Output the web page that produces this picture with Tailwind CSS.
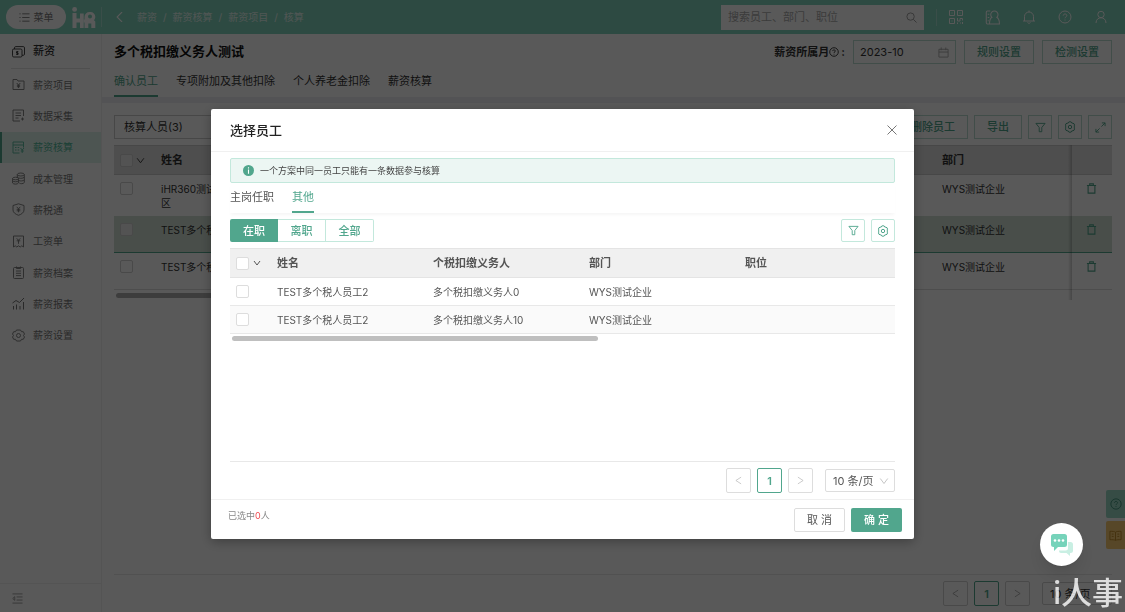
<!DOCTYPE html>
<html lang="zh-CN">
<head>
    <meta charset="UTF-8">
    <meta name="viewport" content="width=device-width, initial-scale=1.0">
    <title>薪资核算</title>
    <script src="https://cdn.jsdelivr.net/npm/@tailwindcss/browser@4"></script>
</head>
<body class="font-['Inter','Noto_Sans_CJK_SC',sans-serif] bg-white text-[#333] text-[11px] leading-[14px] h-screen overflow-hidden flex flex-col">

    <!-- Shared icons -->
    <svg class="hidden">
        <symbol id="i-filter" viewBox="0 0 12 12"><path d="M1 1.500h10L7.400 6v4.600H4.600V6z"/></symbol>
        <symbol id="i-gear" viewBox="0 0 12 12"><path d="M4.700 1.100 6 .7l1.300.4.5 1 1.100.1 1.200.6.400 1.300-.4 1 .6.9-.6.9.400 1-.4 1.300-1.200.6-1.100.1-.5 1L6 11.300l-1.300-.4-.5-1-1.100-.1-1.200-.6-.4-1.300.4-1L1.300 6l.6-.9-.4-1 .4-1.300 1.200-.6 1.100-.1z"/><circle cx="6" cy="6" r="1.700"/></symbol>
        <symbol id="i-trash" viewBox="0 0 12 12"><path d="M1 2.800h10M4 2.800V1h4v1.800M2.300 2.800v8.200h7.400v-8.200"/></symbol>
        <symbol id="i-down" viewBox="0 0 12 12"><path d="m1.500 3 4.500 6 4.500-6"/></symbol>
        <symbol id="i-left" viewBox="0 0 12 12"><path d="M9.500 1.500 2.500 6l7 4.500"/></symbol>
        <symbol id="i-right" viewBox="0 0 12 12"><path d="m2.500 1.500 7 4.500-7 4.500"/></symbol>
        <symbol id="i-help" viewBox="0 0 14 14"><circle cx="7" cy="7" r="6"/><path d="M5.200 5.700c0-2.300 3.600-2.300 3.600-.1C8.800 6.900 7 6.900 7 8.300M7 9.500v1"/></symbol>
    </svg>

    <!-- Top bar -->
    <header class="h-[34px] shrink-0 bg-[#80d3bc] flex items-center pl-[6px] pr-[17px] text-white text-[10px]">
        <button class="w-[60px] h-6 rounded-full bg-white text-[#777] flex items-center justify-center gap-1">
            <svg class="size-[11px]" viewBox="0 0 12 12" fill="none" stroke="currentColor"><path d="M3.500 2h8M3.500 6h8M3.500 10h8M.5 2h1.200M.5 6h1.200M.5 10h1.200"/></svg>
            菜单
        </button>
        <svg class="ml-[6px] w-6 h-[21px]" viewBox="0 0 24 21" aria-label="iHR">
            <g fill="#fff">
                <circle cx="2.600" cy="2.400" r="2.400"/>
                <path d="M.5 6h4v5.500H8V6.500h3.700V21H8v-5.500H4.500V21h-4z"/>
                <path fill-rule="evenodd" d="M12.500 10a5 5 0 0 1 5-5h1a4.800 4.800 0 0 1 4.800 4.800c0 1.500-.6 2.700-1.300 3.400l1.300 1.300V21h-4v-4.500h-3V21h-3.800zM18 7.500a2 2 0 1 0 0 4 2 2 0 1 0 0-4z"/>
                <path d="M11.500 12.500h2v3h-2z"/>
            </g>
        </svg>
        <div class="ml-[5px] w-px h-5 bg-white/30"></div>
        <button class="ml-[13px]" aria-label="返回"><svg class="w-[10px] h-[10px]" viewBox="0 0 12 12" fill="none" stroke="currentColor" stroke-width="1.300"><path d="M8.500 0 2.500 6l6 6"/></svg></button>
        <nav class="ml-[12px] flex gap-[6px] text-white/80">
            <a href="#">薪资</a><span>/</span><a href="#">薪资核算</a><span>/</span><a href="#">薪资项目</a><span>/</span><a href="#">核算</a>
        </nav>
        <div class="ml-auto w-[203px] h-[25px] bg-white flex items-center px-[7px]">
            <input type="text" aria-label="搜索" placeholder="搜索员工、部门、职位" class="flex-1 min-w-0 text-[11px] outline-none placeholder:text-[#aaa]">
            <svg class="size-[11px] text-[#999]" viewBox="0 0 12 12" fill="none" stroke="currentColor"><circle cx="5" cy="5" r="4"/><path d="m8 8 3.500 3.500"/></svg>
        </div>
        <div class="ml-[12px] w-px h-[17px] bg-white/30"></div>
        <div class="ml-[12px] flex items-center gap-[22px]">
            <button aria-label="二维码"><svg class="size-[14px]" viewBox="0 0 14 14" fill="none" stroke="currentColor"><path d="M.5.5h5v5h-5zM8.500.5h5v5h-5zM.5 8.500h5v5h-5zM2.500 3h1M10.500 3h1M2.500 11h1M8.500 8v3h2.500V8.500h2.500v2M8.500 12.500v1.500M11 13h1M13.500 12v2"/></svg></button>
            <button aria-label="通讯录"><svg class="size-[15px]" viewBox="0 0 14 14" fill="none" stroke="currentColor"><path d="M5 1H2.200c-.7 0-1 .4-1 1v10c0 .6.300 1 1 1h1.500M2.500 4h1.500M2.500 7h1.500M2.500 10h1"/><path d="M6.500 6.800A3.400 3.400 0 1 1 11 6.800c1.700 1 2.500 2.700 2.500 6.200H4.200c0-3.500.6-5.200 2.300-6.200z"/></svg></button>
            <button aria-label="通知"><svg class="size-[14px]" viewBox="0 0 14 14" fill="none" stroke="currentColor"><path d="M1 11h12M2.500 11V6.500a4.500 4.500 0 0 1 9 0V11M7 2V.5M5.500 12.500c.5 1 2.500 1 3 0"/></svg></button>
            <button aria-label="帮助"><svg class="size-[14px]" fill="none" stroke="currentColor"><use href="#i-help"/></svg></button>
            <button aria-label="我的"><svg class="size-[14px]" viewBox="0 0 14 14" fill="none" stroke="currentColor"><circle cx="7" cy="4.500" r="3.200"/><path d="M2 13c0-7 10-7 10 0"/></svg></button>
        </div>
    </header>

    <div class="flex-1 min-h-0 flex">
        <!-- Sidebar -->
        <aside class="w-[102px] shrink-0 border-r border-[#f0f0f0] flex flex-col text-[10px] text-[#777]">
            <div class="h-[34px] flex items-center gap-2 pl-[12px] text-[11px] font-medium text-[#333]">
                <svg class="size-[13px]" viewBox="0 0 13 13" fill="none" stroke="currentColor" stroke-width=".9"><rect x=".5" y="4" width="9.500" height="8" rx="1.300"/><path d="M2.500 4V2.800c0-.7.400-1.200 1.200-1.200h7.600c.8 0 1.200.5 1.200 1.200v6.400c0 .7-.4 1.100-1.200 1.100H10M6.400 6.700H4.500v1.300h1.600v1.400H4.200M5.300 6v4"/></svg>
                薪资
            </div>
            <div class="mx-[11px] border-t border-[#e2e2e2]"></div>
            <nav class="grid grid-rows-9 h-[282px]">
                <a href="#" class="flex items-center gap-2 pl-[12px]">
                    <svg class="size-[13px]" viewBox="0 0 13 13" fill="none" stroke="currentColor" stroke-width=".9"><path d="M1 11.500v-10h4l1 1.500h6v8.500zM4.700 5l1.800 2 1.800-2M6.500 7v3M4.900 7.300h3.200M4.900 8.700h3.200"/></svg>
                    薪资项目
                </a>
                <a href="#" class="flex items-center gap-2 pl-[12px]">
                    <svg class="size-[13px]" viewBox="0 0 13 13" fill="none" stroke="currentColor" stroke-width=".9"><path d="M11.500 7V1H1v11h7M3.500 4H9M3.500 6.500H9M3.500 9h3M10.500 8.500v3M9 10h3"/></svg>
                    数据采集
                </a>
                <a href="#" class="flex items-center gap-2 pl-[10px] border-l-2 border-[#51a68d] bg-[#dcf3ec] text-[#51b898]">
                    <svg class="size-[13px]" viewBox="0 0 13 13" fill="none" stroke="currentColor" stroke-width=".9"><path d="M11.500 6.500V1H1v11h6.500M1 4h10.500M3 6.500h1.500M5.700 6.500h1.500M3 9h1.500M5.700 9h1.500M8.500 7l1.700 2L12 7M10.200 9v3M8.800 10h3"/></svg>
                    薪资核算
                </a>
                <a href="#" class="flex items-center gap-2 pl-[12px]">
                    <svg class="size-[13px]" viewBox="0 0 13 13" fill="none" stroke="currentColor" stroke-width=".9"><ellipse cx="8.800" cy="2.500" rx="3.500" ry="1.500"/><path d="M5.300 2.500v3M12.300 2.500v8c-1 1.500-4 1.500-5 .5M5.300 5.200c1 1.500 6 1.500 7 0M6.500 8.500c2 .8 5 .5 5.800-.6"/><ellipse cx="3.500" cy="6.500" rx="2.900" ry="1.300"/><path d="M.6 6.500V11c.8 1.500 5 1.500 5.800 0V6.500M.6 8.800c.8 1.300 5 1.300 5.800 0"/></svg>
                    成本管理
                </a>
                <a href="#" class="flex items-center gap-2 pl-[12px]">
                    <svg class="size-[13px]" viewBox="0 0 13 13" fill="none" stroke="currentColor" stroke-width=".9"><path d="M6.500.8 12 2.500v4.500c0 2.500-2.500 4.300-5.500 5.300C3.500 11.300 1 9.500 1 7V2.500zM4.700 3.800l1.800 2 1.800-2M6.500 5.800v3.500M4.700 6.300h3.600M4.700 7.800h3.600"/></svg>
                    薪税通
                </a>
                <a href="#" class="flex items-center gap-2 pl-[12px]">
                    <svg class="size-[13px]" viewBox="0 0 13 13" fill="none" stroke="currentColor" stroke-width=".9"><path d="M1.500 12V1h10v11l-1.700-1.200L8.200 12l-1.700-1.200L4.800 12l-1.600-1.200zM4.700 3.300l1.800 2 1.800-2M6.500 5.300v3.500M4.700 5.800h3.600"/></svg>
                    工资单
                </a>
                <a href="#" class="flex items-center gap-2 pl-[12px]">
                    <svg class="size-[13px]" viewBox="0 0 13 13" fill="none" stroke="currentColor" stroke-width=".9"><rect x="1.500" y="1.500" width="10" height="11" rx="1"/><path d="M4.500.5v2h4v-2M4 5h5M4 7.300h5M4 9.600h5"/></svg>
                    薪资档案
                </a>
                <a href="#" class="flex items-center gap-2 pl-[12px]">
                    <svg class="size-[13px]" viewBox="0 0 13 13" fill="none" stroke="currentColor"><path d="M1.500 9v3.500M4.500 7.500v5M8 9v3.500M11.500 5v7.500M.5 6 4 3.500l3.500 2L12 1"/></svg>
                    薪资报表
                </a>
                <a href="#" class="flex items-center gap-2 pl-[12px]">
                    <svg class="size-[13px]" viewBox="0 0 13 13" fill="none" stroke="currentColor" stroke-width=".9"><path d="M4.500 1h4l1 1.700h1.800L12.500 5l-1 1.500 1 1.500-1.200 2.300H9.500L8.500 12h-4l-1-1.700H1.700L.5 8l1-1.500L.5 5l1.200-2.300h1.800z"/><circle cx="6.500" cy="6.500" r="2"/></svg>
                    薪资设置
                </a>
            </nav>
            <div class="mt-auto h-[29px] border-t border-[#efefef] flex items-center pl-[12px]">
                <button aria-label="收起菜单"><svg class="block size-[11px] text-[#999]" viewBox="0 0 12 12" fill="none" stroke="currentColor"><path d="M.5 1h11M5 4.300h6.500M5 7.700h6.500M.5 11h11M3 4v4L.8 6z"/></svg></button>
            </div>
        </aside>

        <!-- Main page -->
        <main class="flex-1 min-w-0 flex flex-col">
            <div class="flex items-center gap-2 pt-[6px] pl-[12px] pr-[13px]">
                <h1 class="text-[13px] font-bold text-[#111] mr-auto pb-[2px]">多个税扣缴义务人测试</h1>
                <label for="month" class="font-bold flex items-center">薪资所属月<svg class="size-[10px]" fill="none" stroke="currentColor" stroke-width="1.300" viewBox="0 0 14 14"><use href="#i-help"/></svg><span class="pl-[2px]">:</span></label>
                <div class="w-[103px] h-6 border border-[#b9ddd2] flex items-center px-[6px]">
                    <input id="month" type="text" value="2023-10" class="flex-1 min-w-0 outline-none">
                    <svg class="size-[11px] text-[#aaa]" viewBox="0 0 12 12" fill="none" stroke="currentColor"><path d="M1 2.500h10v8.500H1zM1 5.500h10M3.500.5v3M8.500.5v3"/></svg>
                </div>
                <button class="h-6 px-[12px] border border-[#b9ddd2] text-[#51a68d] font-medium">规则设置</button>
                <button class="h-6 px-[12px] border border-[#b9ddd2] text-[#51a68d] font-medium">检测设置</button>
            </div>
            <nav class="flex gap-[18px] px-[12px] h-[33px]">
                <a href="#" class="flex items-center pt-[2px] border-b-2 border-[#51a68d] text-[#51a68d]">确认员工</a>
                <a href="#" class="flex items-center pt-[2px] border-b-2 border-transparent">专项附加及其他扣除</a>
                <a href="#" class="flex items-center pt-[2px] border-b-2 border-transparent">个人养老金扣除</a>
                <a href="#" class="flex items-center pt-[2px] border-b-2 border-transparent">薪资核算</a>
            </nav>
            <div class="h-[6px] bg-[#edeef3]"></div>

            <div class="flex-1 flex flex-col pl-[12px] pr-[13px] pt-[12px]">
                <div class="flex items-center gap-[6px]">
                    <button class="mr-auto w-[120px] h-6 border border-[#ccc] text-left pl-[9px]">核算人员(3)</button>
                    <button class="h-6 px-[12px] border border-[#b9ddd2] text-[#51a68d] font-medium">删除员工</button>
                    <button class="h-6 px-[12px] border border-[#b9ddd2] text-[#51a68d] font-medium">导出</button>
                    <button aria-label="筛选" class="size-6 border border-[#b9ddd2] text-[#51a68d] flex items-center justify-center"><svg class="size-[11px]" fill="none" stroke="currentColor"><use href="#i-filter"/></svg></button>
                    <button aria-label="设置" class="size-6 border border-[#b9ddd2] text-[#51a68d] flex items-center justify-center"><svg class="size-[12px]" fill="none" stroke="currentColor"><use href="#i-gear"/></svg></button>
                    <button aria-label="全屏" class="size-6 border border-[#b9ddd2] text-[#51a68d] flex items-center justify-center"><svg class="size-[11px]" viewBox="0 0 12 12" fill="none" stroke="currentColor"><path d="M7.500 1H11v3.500M11 1 7 5M4.500 11H1V7.500M1 11l4-4"/></svg></button>
                </div>

                <div class="relative mt-[6px] pb-[10px]">
                    <table class="w-full table-fixed text-left text-[10px]">
                        <colgroup><col class="w-[47px]"><col><col class="w-[130px]"><col class="w-[40px]"></colgroup>
                        <thead class="bg-[#dedede] text-[11px]">
                            <tr class="h-[29px] border-y border-[#ccc]">
                                <th class="pl-[6px]"><div class="flex items-center gap-[3px]"><input type="checkbox" aria-label="全选" class="appearance-none size-[13px] border border-[#d0d0d0] rounded-xs bg-[#eee]"><svg class="size-[9px]" fill="none" stroke="currentColor" stroke-width="1.200"><use href="#i-down"/></svg></div></th>
                                <th>姓名</th><th>部门</th><th></th>
                            </tr>
                        </thead>
                        <tbody class="align-top">
                            <tr class="h-[41px]">
                                <td class="pl-[6px] pt-[7px]"><input type="checkbox" aria-label="选择" class="block appearance-none size-[13px] border border-[#d0d0d0] rounded-xs"></td>
                                <td class="pt-[7px]">iHR360测试<br>区</td><td class="pt-[7px]">WYS测试企业</td>
                                <td class="pt-[8px] pl-[14px] text-[#51a68d]"><button aria-label="删除"><svg class="block size-[11px]" fill="none" stroke="currentColor" stroke-width="1.200"><use href="#i-trash"/></svg></button></td>
                            </tr>
                            <tr class="h-[37px] bg-[#d0dfd4] border-b border-[#51a68d]">
                                <td class="pl-[6px] pt-[7px]"><input type="checkbox" aria-label="选择" class="block appearance-none size-[13px] border border-[#d0d0d0] rounded-xs bg-[#eee]"></td>
                                <td class="pt-[7px]">TEST多个税</td><td class="pt-[7px]">WYS测试企业</td>
                                <td class="pt-[8px] pl-[14px] text-[#51a68d]"><button aria-label="删除"><svg class="block size-[11px]" fill="none" stroke="currentColor" stroke-width="1.200"><use href="#i-trash"/></svg></button></td>
                            </tr>
                            <tr class="h-[37px] border-b border-[#ddd]">
                                <td class="pl-[6px] pt-[7px]"><input type="checkbox" aria-label="选择" class="block appearance-none size-[13px] border border-[#d0d0d0] rounded-xs"></td>
                                <td class="pt-[7px]">TEST多个税</td><td class="pt-[7px]">WYS测试企业</td>
                                <td class="pt-[8px] pl-[14px] text-[#51a68d]"><button aria-label="删除"><svg class="block size-[11px]" fill="none" stroke="currentColor" stroke-width="1.200"><use href="#i-trash"/></svg></button></td>
                            </tr>
                        </tbody>
                    </table>
                    <!-- shadow of the pinned column -->
                    <div class="absolute inset-y-0 right-[40px] w-1 bg-linear-to-l from-black/20 to-transparent"></div>
                    <div class="absolute bottom-[2px] left-[2px] h-[5px] w-1/2 rounded-full bg-[#b0b0b0]"></div>
                </div>

                <div class="mt-auto h-[38px] border-t border-[#e8e8e8] flex items-center justify-end gap-[6px]">
                    <button aria-label="上一页" class="w-[25px] h-[25px] border border-[#d0d0d0] rounded-xs flex items-center justify-center"><svg class="size-[9px] text-[#999]" fill="none" stroke="currentColor"><use href="#i-left"/></svg></button>
                    <button class="w-[25px] h-[25px] border border-[#51a68d] rounded-xs text-[#51a68d] font-semibold">1</button>
                    <button aria-label="下一页" class="w-[25px] h-[25px] border border-[#d0d0d0] rounded-xs flex items-center justify-center"><svg class="size-[9px] text-[#999]" fill="none" stroke="currentColor"><use href="#i-right"/></svg></button>
                    <select aria-label="每页条数" class="appearance-none ml-[6px] w-[70px] h-[23px] border border-[#d0d0d0] rounded-xs pl-[7px]"><option>10 条/页</option></select>
                </div>
            </div>
        </main>
    </div>

    <!-- Side shortcuts -->
    <div class="fixed right-0 top-[490px] flex flex-col gap-[3px]">
        <button aria-label="帮助中心" class="w-[19px] h-7 rounded-l-xs bg-[#9ad9c6] text-[#3a8f76] flex items-center justify-center"><svg class="size-[12px]" fill="none" stroke="currentColor"><use href="#i-help"/></svg></button>
        <button aria-label="手册" class="w-[19px] h-7 rounded-l-xs bg-[#f8cb72] text-[#c08a28] flex items-center justify-center"><svg class="size-[13px]" viewBox="0 0 14 14" fill="none" stroke="currentColor"><path d="M7 3.500C6 2.500 3.500 2.500 1 2.500v9c2.500 0 5 0 6 .8 1-.8 3.500-.8 6-.8v-9c-2.500 0-5 0-6 1zM7 3.500v8.500M3 5.500h2M3 8h2M9 5.500h2M9 8h2"/></svg></button>
    </div>

    <!-- Modal -->
    <div class="fixed inset-0 bg-black/65 flex justify-center items-start pt-[109px]">
        <div role="dialog" aria-label="选择员工" class="w-5/8 min-h-[430px] bg-white rounded-xs shadow-[0_3px_12px_rgba(0,0,0,0.3)] flex flex-col">
            <div class="h-[43px] border-b border-[#f0f0f0] flex items-center justify-between pl-[19px] pr-[17px]">
                <h2 class="text-[13px] font-medium text-[#222]">选择员工</h2>
                <button aria-label="关闭"><svg class="size-[10px] text-[#777]" viewBox="0 0 10 10" fill="none" stroke="currentColor"><path d="m.5.5 9 9M9.500.5l-9 9"/></svg></button>
            </div>

            <div class="flex-1 flex flex-col px-[19px] pt-[6px]">
                <div class="h-[25px] border border-[#c3e8dc] bg-[#ecf6f3] rounded-xs flex items-center gap-[6px] pl-[12px] text-[9px] text-[#444]">
                    <svg class="size-[11px]" viewBox="0 0 12 12"><circle cx="6" cy="6" r="6" fill="#51a68d"/><path d="M6 2.500v1.200M6 5v4.500" stroke="#fff" stroke-width="1.200"/></svg>
                    一个方案中同一员工只能有一条数据参与核算
                </div>
                <nav class="flex gap-[18px] h-[30px] text-[#555] shadow-[0_3px_3px_-1px_rgba(0,0,0,0.04)]">
                    <a href="#" class="flex items-center border-b-2 border-transparent">主岗任职</a>
                    <a href="#" class="flex items-center border-b-2 border-[#51a68d] text-[#51a68d]">其他</a>
                </nav>

                <div class="mt-[6px] flex gap-[6px]">
                    <div class="mr-auto flex text-[#51a68d] font-medium">
                        <button class="w-12 h-[23px] bg-[#51a68d] text-white rounded-l-xs">在职</button>
                        <button class="w-12 h-[23px] border-y border-r border-[#c3e8dc]">离职</button>
                        <button class="w-12 h-[23px] border-y border-r border-[#c3e8dc] rounded-r-xs">全部</button>
                    </div>
                    <button aria-label="筛选" class="w-6 h-[23px] border border-[#c3e8dc] rounded-xs text-[#51a68d] flex items-center justify-center"><svg class="size-[11px]" fill="none" stroke="currentColor"><use href="#i-filter"/></svg></button>
                    <button aria-label="设置" class="w-6 h-[23px] border border-[#c3e8dc] rounded-xs text-[#51a68d] flex items-center justify-center"><svg class="size-[12px]" fill="none" stroke="currentColor"><use href="#i-gear"/></svg></button>
                </div>

                <table class="mt-[6px] w-full table-fixed text-left text-[10px] text-[#555]">
                    <colgroup><col class="w-[47px]"><col class="w-[156px]"><col class="w-[156px]"><col class="w-[156px]"><col></colgroup>
                    <thead class="bg-[#f0f0f0] text-[11px]">
                        <tr class="h-[29px] border-y border-[#e4e4e4]">
                            <th class="pl-[6px]"><div class="flex items-center gap-[4px]"><input type="checkbox" aria-label="全选" class="appearance-none size-[13px] border border-[#ddd] rounded-xs bg-white"><svg class="size-[8px]" fill="none" stroke="currentColor" stroke-width="1.500"><use href="#i-down"/></svg></div></th>
                            <th>姓名</th><th>个税扣缴义务人</th><th>部门</th><th>职位</th>
                        </tr>
                    </thead>
                    <tbody>
                        <tr class="h-[28px] border-b border-[#e8e8e8]">
                            <td class="pl-[6px]"><input type="checkbox" aria-label="选择" class="block appearance-none size-[13px] border border-[#ddd] rounded-xs bg-white"></td>
                            <td>TEST多个税人员工2</td><td>多个税扣缴义务人0</td><td>WYS测试企业</td><td></td>
                        </tr>
                        <tr class="h-[28px] border-b border-[#e8e8e8] bg-[#fafafa]">
                            <td class="pl-[6px]"><input type="checkbox" aria-label="选择" class="block appearance-none size-[13px] border border-[#ddd] rounded-xs bg-white"></td>
                            <td>TEST多个税人员工2</td><td>多个税扣缴义务人10</td><td>WYS测试企业</td><td></td>
                        </tr>
                    </tbody>
                </table>
                <div class="mt-[2px] ml-[2px] h-[5px] w-[55%] rounded-full bg-[#bfbfbf]"></div>

                <div class="mt-auto h-[38px] border-t border-[#e8e8e8] flex items-center justify-end gap-[6px]">
                    <button aria-label="上一页" class="w-[25px] h-[25px] border border-[#ddd] rounded-xs flex items-center justify-center"><svg class="size-[9px] text-[#bbb]" fill="none" stroke="currentColor"><use href="#i-left"/></svg></button>
                    <button class="w-[25px] h-[25px] border border-[#51a68d] rounded-xs text-[#51a68d] font-semibold">1</button>
                    <button aria-label="下一页" class="w-[25px] h-[25px] border border-[#ddd] rounded-xs flex items-center justify-center"><svg class="size-[9px] text-[#bbb]" fill="none" stroke="currentColor"><use href="#i-right"/></svg></button>
                    <div class="relative ml-[6px]">
                        <select aria-label="每页条数" class="block appearance-none w-[70px] h-[23px] border border-[#ddd] rounded-xs pl-[7px] text-[#555]"><option>10 条/页</option></select>
                        <svg class="absolute right-[6px] top-[7px] size-[10px] text-[#bbb] pointer-events-none" fill="none" stroke="currentColor"><use href="#i-down"/></svg>
                    </div>
                </div>
            </div>

            <div class="h-[40px] border-t border-[#f0f0f0] flex items-center pl-[17px] pr-[12px] gap-[6px]">
                <p class="mr-auto pb-[8px] text-[9px] text-[#888]">已选中<span class="text-[#f04a50]">0</span>人</p>
                <button class="w-[51px] h-6 border border-[#ddd] rounded-xs text-[#555]">取 消</button>
                <button class="w-[51px] h-6 rounded-xs bg-[#51a68d] text-white font-medium">确 定</button>
            </div>
        </div>
    </div>

    <!-- Chat button and brand mark -->
    <button aria-label="在线客服" class="fixed right-[42px] bottom-[46px] size-[43px] rounded-full bg-white shadow-lg flex items-center justify-center">
        <svg class="w-[24px] h-[24px]" viewBox="0 0 24 24">
            <path d="M18 9h2.500a2.500 2.500 0 0 1 2.500 2.500v6a2.500 2.500 0 0 1-2.500 2.500H20v3l-3.500-3H11a2 2 0 0 1-2-2v-.5h6.500A2.500 2.500 0 0 0 18 15z" fill="#c9efe3"/>
            <path d="M3.500 1h11A2.500 2.500 0 0 1 17 3.500v8a2.500 2.500 0 0 1-2.500 2.500H8l-4 4v-4h-.5A2.500 2.500 0 0 1 1 11.500v-8A2.500 2.500 0 0 1 3.500 1z" fill="#76d3ba"/>
            <g fill="#fff"><circle cx="5" cy="7.500" r="1.300"/><circle cx="9" cy="7.500" r="1.300"/><circle cx="13" cy="7.500" r="1.300"/></g>
        </svg>
    </button>
    <div class="fixed right-[2px] bottom-[3px] text-[31px] leading-8 font-medium text-white/80 pointer-events-none">i人事</div>
</body>
</html>
